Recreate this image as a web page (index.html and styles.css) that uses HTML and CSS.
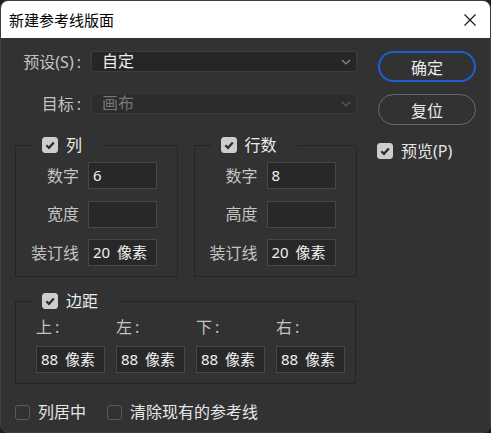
FILE: index.html
```html
<!DOCTYPE html>
<html lang="zh-CN">
<head>
<meta charset="utf-8">
<title>新建参考线版面</title>
<link rel="stylesheet" href="styles.css">
</head>
<body>
<div class="window">
  <div class="titlebar">
    <span class="title">新建参考线版面</span>
    <svg class="close" width="14" height="14" viewBox="0 0 14 14"><path d="M1.5 1.5 L12.5 12.5 M12.5 1.5 L1.5 12.5" stroke="#1a1a1a" stroke-width="1.2" fill="none"/></svg>
  </div>
  <div class="content">
    <div class="main">
      <div class="field-row">
        <span class="lbl">预设(S)<span class="colon">:</span></span>
        <div class="select"><span>自定</span><svg class="chev" width="10" height="6" viewBox="0 0 10 6"><path d="M1 1 L5 5 L9 1" stroke="#8a8a8a" stroke-width="1.2" fill="none"/></svg></div>
      </div>
      <div class="field-row row2">
        <span class="lbl">目标<span class="colon">:</span></span>
        <div class="select disabled"><span>画布</span><svg class="chev" width="10" height="6" viewBox="0 0 10 6"><path d="M1 1 L5 5 L9 1" stroke="#5e5e5e" stroke-width="1.2" fill="none"/></svg></div>
      </div>
      <div class="groups">
        <fieldset class="group cols">
          <legend><span class="cb checked"><svg width="16" height="16" viewBox="0 0 16 16"><path d="M4.3 8.2 L7 10.8 L11.8 5.4" stroke="#2c2c2c" stroke-width="2.2" fill="none"/></svg></span><span class="ltext">列</span></legend>
          <div class="grid">
            <span class="glbl">数字</span><div class="input">6</div>
            <span class="glbl">宽度</span><div class="input"></div>
            <span class="glbl">装订线</span><div class="input">20 像素</div>
          </div>
        </fieldset>
        <fieldset class="group rows">
          <legend><span class="cb checked"><svg width="16" height="16" viewBox="0 0 16 16"><path d="M4.3 8.2 L7 10.8 L11.8 5.4" stroke="#2c2c2c" stroke-width="2.2" fill="none"/></svg></span><span class="ltext">行数</span></legend>
          <div class="grid">
            <span class="glbl">数字</span><div class="input">8</div>
            <span class="glbl">高度</span><div class="input"></div>
            <span class="glbl">装订线</span><div class="input">20 像素</div>
          </div>
        </fieldset>
      </div>
      <fieldset class="group margins">
        <legend><span class="cb checked"><svg width="16" height="16" viewBox="0 0 16 16"><path d="M4.3 8.2 L7 10.8 L11.8 5.4" stroke="#2c2c2c" stroke-width="2.2" fill="none"/></svg></span><span class="ltext">边距</span></legend>
        <div class="mgrid">
          <span class="mlbl">上<span class="colon">:</span></span>
          <span class="mlbl">左<span class="colon">:</span></span>
          <span class="mlbl">下<span class="colon">:</span></span>
          <span class="mlbl">右<span class="colon">:</span></span>
          <div class="input">88 像素</div>
          <div class="input">88 像素</div>
          <div class="input">88 像素</div>
          <div class="input">88 像素</div>
        </div>
      </fieldset>
      <div class="bottom">
        <span class="cb"></span><span class="btext">列居中</span>
        <span class="cb second"></span><span class="btext">清除现有的参考线</span>
      </div>
    </div>
    <div class="side">
      <div class="btn primary">确定</div>
      <div class="btn">复位</div>
      <div class="preview"><span class="cb checked"><svg width="16" height="16" viewBox="0 0 16 16"><path d="M4.3 8.2 L7 10.8 L11.8 5.4" stroke="#2c2c2c" stroke-width="2.2" fill="none"/></svg></span><span class="ptext">预览(P)</span></div>
    </div>
  </div>
</div>
</body>
</html>
```
FILE: styles.css
```css
* { box-sizing: border-box; }
html, body {
  margin: 0;
  padding: 0;
  background: #1e1e1e;
}
body {
  width: 491px;
  height: 433px;
  font-family: "Noto Sans", "Noto Sans CJK SC", sans-serif;
  font-size: 16px;
  color: #e6e6e6;
}
.window {
  width: 491px;
  height: 433px;
  border-radius: 8px;
  overflow: hidden;
  background: #323232;
  border: 1px solid #3e3e3e;
  display: flex;
  flex-direction: column;
}
.titlebar {
  height: 37px;
  background: #ffffff;
  display: flex;
  align-items: center;
  justify-content: space-between;
  padding: 0 13px 0 8px;
  flex: none;
}
.title {
  font-size: 15px;
  line-height: 20px;
  color: #000;
  font-family: "Noto Sans CJK SC", sans-serif;
}
.close { display: block; }
.content {
  display: flex;
  padding-top: 13px;
}
.main {
  width: 356px;
  padding-left: 14px;
}
.field-row {
  display: flex;
  align-items: center;
  height: 21px;
}
.row2 { margin-top: 21px; }
.lbl {
  width: 66px;
  margin-right: 10px;
  text-align: right;
  color: #c4c4c4;
  line-height: 20px;
  white-space: nowrap;
}
.colon { margin-left: 3px; }
.select {
  width: 266px;
  height: 21px;
  background: #262626;
  border: 1px solid #3d3d3d;
  border-radius: 3px;
  display: flex;
  align-items: center;
  justify-content: space-between;
  padding: 0 5px 0 10px;
  line-height: 19px;
  color: #ececec;
}
.select.disabled {
  background: #2c2c2c;
  border-color: #383838;
  color: #767676;
}
.chev { display: block; }
.groups {
  display: flex;
  gap: 16px;
  margin-top: 23px;
}
.group {
  margin: 0;
  padding: 0;
  border: 1px solid #252525;
  min-width: 0;
}
.group legend {
  margin-left: 17px;
  padding: 0 21px 0 9px;
  display: flex;
  align-items: center;
  height: 16px;
}
.cols { width: 163px; }
.rows { width: 164px; }
.cb {
  width: 16px;
  height: 16px;
  border-radius: 3px;
  border: 1px solid #5a5a5a;
  display: inline-block;
  flex: none;
}
.cb.checked {
  background: #cdcdcd;
  border-color: #cdcdcd;
}
.cb svg { display: block; margin: -1px; }
.ltext {
  margin-left: 8px;
  line-height: 16px;
  color: #ececec;
}
.grid {
  display: grid;
  grid-template-columns: 63px 69px;
  grid-auto-rows: 27px;
  column-gap: 9px;
  row-gap: 11.5px;
  padding: 9px 0 10px 0;
  align-items: center;
}
.glbl {
  text-align: right;
  color: #c4c4c4;
  line-height: 20px;
}
.input {
  height: 27px;
  width: 69px;
  background: #282828;
  border: 1px solid #474747;
  padding: 0 4px;
  font-size: 15px;
  line-height: 25px;
  color: #f0f0f0;
  white-space: nowrap;
  word-spacing: 3px;
}
.margins {
  width: 341px;
  margin-top: 16px;
}
.mgrid {
  display: grid;
  grid-template-columns: repeat(4, 69px);
  grid-template-rows: 20px 27px;
  column-gap: 11px;
  row-gap: 9px;
  padding: 8px 0 10px 20px;
}
.mlbl {
  color: #c4c4c4;
  line-height: 20px;
}
.bottom {
  display: flex;
  align-items: center;
  margin-top: 18px;
}
.bottom .cb {
  width: 15px;
  height: 15px;
}
.btext {
  margin-left: 8px;
  line-height: 20px;
  color: #e6e6e6;
}
.bottom .second { margin-left: 21px; }
.side {
  margin-left: 21px;
  width: 98px;
  display: flex;
  flex-direction: column;
}
.btn {
  width: 98px;
  height: 31px;
  border-radius: 16px;
  border: 1.5px solid #6a6a6a;
  display: flex;
  align-items: center;
  justify-content: center;
  font-size: 16px;
  color: #ececec;
}
.btn + .btn { margin-top: 12px; }
.btn.primary {
  border: 2px solid #1c5fd1;
}
.preview {
  display: flex;
  align-items: center;
  margin-top: 16px;
  margin-left: -1px;
}
.ptext {
  margin-left: 8px;
  line-height: 20px;
  color: #e6e6e6;
}
```
